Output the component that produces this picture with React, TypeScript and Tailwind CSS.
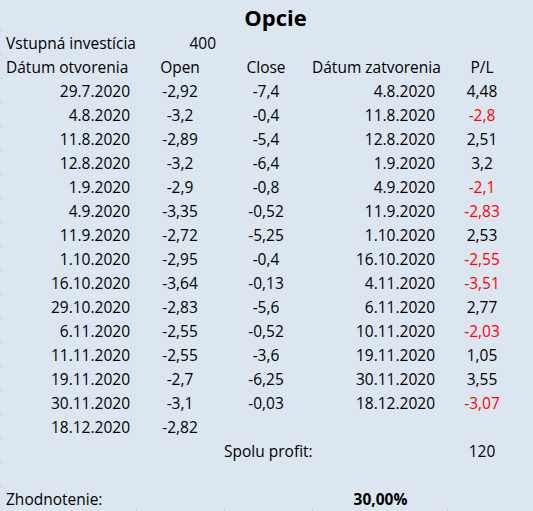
import React from "react";

type Row = { o: string; op: string; cl?: string; z?: string; pl?: string; red?: boolean };

const rows: Row[] = [
  { o: "29.7.2020", op: "-2,92", cl: "-7,4", z: "4.8.2020", pl: "4,48" },
  { o: "4.8.2020", op: "-3,2", cl: "-0,4", z: "11.8.2020", pl: "-2,8", red: true },
  { o: "11.8.2020", op: "-2,89", cl: "-5,4", z: "12.8.2020", pl: "2,51" },
  { o: "12.8.2020", op: "-3,2", cl: "-6,4", z: "1.9.2020", pl: "3,2" },
  { o: "1.9.2020", op: "-2,9", cl: "-0,8", z: "4.9.2020", pl: "-2,1", red: true },
  { o: "4.9.2020", op: "-3,35", cl: "-0,52", z: "11.9.2020", pl: "-2,83", red: true },
  { o: "11.9.2020", op: "-2,72", cl: "-5,25", z: "1.10.2020", pl: "2,53" },
  { o: "1.10.2020", op: "-2,95", cl: "-0,4", z: "16.10.2020", pl: "-2,55", red: true },
  { o: "16.10.2020", op: "-3,64", cl: "-0,13", z: "4.11.2020", pl: "-3,51", red: true },
  { o: "29.10.2020", op: "-2,83", cl: "-5,6", z: "6.11.2020", pl: "2,77" },
  { o: "6.11.2020", op: "-2,55", cl: "-0,52", z: "10.11.2020", pl: "-2,03", red: true },
  { o: "11.11.2020", op: "-2,55", cl: "-3,6", z: "19.11.2020", pl: "1,05" },
  { o: "19.11.2020", op: "-2,7", cl: "-6,25", z: "30.11.2020", pl: "3,55" },
  { o: "30.11.2020", op: "-3,1", cl: "-0,03", z: "18.12.2020", pl: "-3,07", red: true },
  { o: "18.12.2020", op: "-2,82" },
];

const grid = "grid grid-cols-[136px_88px_88px_129px_82px] h-[24px] pt-[3px] items-center";

export default function App() {
  const leftTicks = Array.from({ length: 20 }, (_, i) => 30 + i * 24);
  const bottomTicks = [136, 224, 312, 447];
  return (
    <div
      className="relative w-[533px] h-[511px] overflow-hidden bg-[#dce6f1] text-black text-[15.5px] leading-none"
      style={{ fontFamily: '"Open Sans", "Noto Sans", sans-serif' }}
    >
      <div className="h-[30px] flex items-center justify-center pl-[18px] pt-[4px] text-[22px] font-bold">
        Opcie
      </div>
      <div className={grid}>
        <div className="pl-[6px] whitespace-nowrap">Vstupná investícia</div>
        <div className="text-right pr-[8px]">400</div>
      </div>
      <div className={grid}>
        <div className="pl-[6px] whitespace-nowrap">Dátum otvorenia</div>
        <div className="text-center">Open</div>
        <div className="text-center pr-[4px]">Close</div>
        <div className="text-right pr-[6px] whitespace-nowrap">Dátum zatvorenia</div>
        <div className="text-center">P/L</div>
      </div>
      {rows.map((r, i) => (
        <div key={i} className={grid}>
          <div className="text-right pr-[6px]">{r.o}</div>
          <div className="text-center">{r.op}</div>
          <div className="text-center pr-[4px]">{r.cl ?? ""}</div>
          <div className="text-right pr-[6px]">{r.z ?? ""}</div>
          <div className={r.red ? "text-center text-[#ff0000]" : "text-center"}>{r.pl ?? ""}</div>
        </div>
      ))}
      <div className={grid}>
        <div />
        <div />
        <div className="col-span-2 whitespace-nowrap">Spolu profit:</div>
        <div className="text-center">120</div>
      </div>
      <div className={grid} />
      <div className={grid}>
        <div className="pl-[6px] whitespace-nowrap">Zhodnotenie:</div>
        <div />
        <div />
        <div className="text-center pl-[8px] font-bold">30,00%</div>
      </div>
      {leftTicks.map((t) => (
        <div key={t} className="absolute left-0 w-[2px] h-px bg-[#c8c8c8]" style={{ top: t }} />
      ))}
      {bottomTicks.map((x) => (
        <div key={x} className="absolute bottom-0 w-px h-[2px] bg-[#c8c8c8]" style={{ left: x }} />
      ))}
    </div>
  );
}
